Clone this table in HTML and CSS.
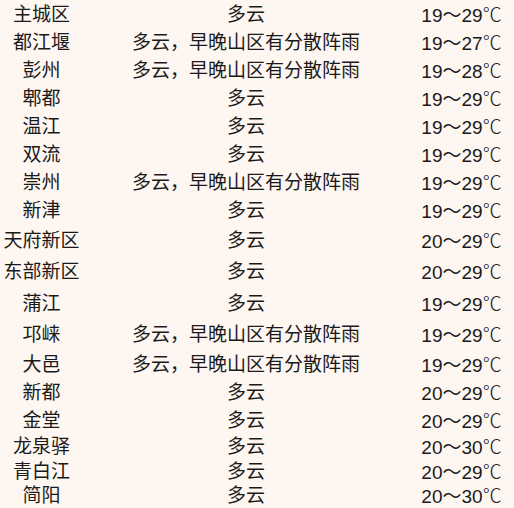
FILE: index.html
```html
<!DOCTYPE html>
<html lang="zh-CN">
<head>
<meta charset="utf-8">
<title>成都天气</title>
<link rel="stylesheet" href="styles.css">
</head>
<body>
<div class="table">
  <div class="row"><div class="name">主城区</div><div class="desc">多云</div><div class="temp">19～29<span class="unit">℃</span></div></div>
  <div class="row"><div class="name">都江堰</div><div class="desc">多云，早晚山区有分散阵雨</div><div class="temp">19～27<span class="unit">℃</span></div></div>
  <div class="row"><div class="name">彭州</div><div class="desc">多云，早晚山区有分散阵雨</div><div class="temp">19～28<span class="unit">℃</span></div></div>
  <div class="row"><div class="name">郫都</div><div class="desc">多云</div><div class="temp">19～29<span class="unit">℃</span></div></div>
  <div class="row"><div class="name">温江</div><div class="desc">多云</div><div class="temp">19～29<span class="unit">℃</span></div></div>
  <div class="row"><div class="name">双流</div><div class="desc">多云</div><div class="temp">19～29<span class="unit">℃</span></div></div>
  <div class="row"><div class="name">崇州</div><div class="desc">多云，早晚山区有分散阵雨</div><div class="temp">19～29<span class="unit">℃</span></div></div>
  <div class="row"><div class="name">新津</div><div class="desc">多云</div><div class="temp">19～29<span class="unit">℃</span></div></div>
  <div class="row tall"><div class="name">天府新区</div><div class="desc">多云</div><div class="temp">20～29<span class="unit">℃</span></div></div>
  <div class="row tall"><div class="name">东部新区</div><div class="desc">多云</div><div class="temp">20～29<span class="unit">℃</span></div></div>
  <div class="row tall"><div class="name">蒲江</div><div class="desc">多云</div><div class="temp">19～29<span class="unit">℃</span></div></div>
  <div class="row tall"><div class="name">邛崃</div><div class="desc">多云，早晚山区有分散阵雨</div><div class="temp">19～29<span class="unit">℃</span></div></div>
  <div class="row"><div class="name">大邑</div><div class="desc">多云，早晚山区有分散阵雨</div><div class="temp">19～29<span class="unit">℃</span></div></div>
  <div class="row"><div class="name">新都</div><div class="desc">多云</div><div class="temp">20～29<span class="unit">℃</span></div></div>
  <div class="row"><div class="name">金堂</div><div class="desc">多云</div><div class="temp">20～29<span class="unit">℃</span></div></div>
  <div class="row short"><div class="name">龙泉驿</div><div class="desc">多云</div><div class="temp">20～30<span class="unit">℃</span></div></div>
  <div class="row short"><div class="name">青白江</div><div class="desc">多云</div><div class="temp">20～29<span class="unit">℃</span></div></div>
  <div class="row short"><div class="name">简阳</div><div class="desc">多云</div><div class="temp">20～30<span class="unit">℃</span></div></div>
</div>
</body>
</html>
```

FILE: styles.css
```css
html, body {
  margin: 0;
  padding: 0;
  background: #fef6f1;
}

body {
  font-family: "Liberation Sans", "Noto Sans CJK SC", sans-serif;
  font-size: 19px;
  color: #1a1a1a;
}

.table {
  display: flex;
  flex-direction: column;
  width: 514px;
}

.row {
  display: grid;
  grid-template-columns: 83px 326px 105px;
  align-items: center;
  height: 28px;
  line-height: 1;
  padding-top: 1px;
  box-sizing: border-box;
}

.row.tall {
  height: 31.5px;
}

.row.short {
  height: 24.5px;
}

.name,
.desc,
.temp {
  text-align: center;
  white-space: nowrap;
}

.unit {
  font-family: "Noto Sans CJK SC", sans-serif;
  font-weight: 300;
  font-feature-settings: "fwid" 1;
}
```
